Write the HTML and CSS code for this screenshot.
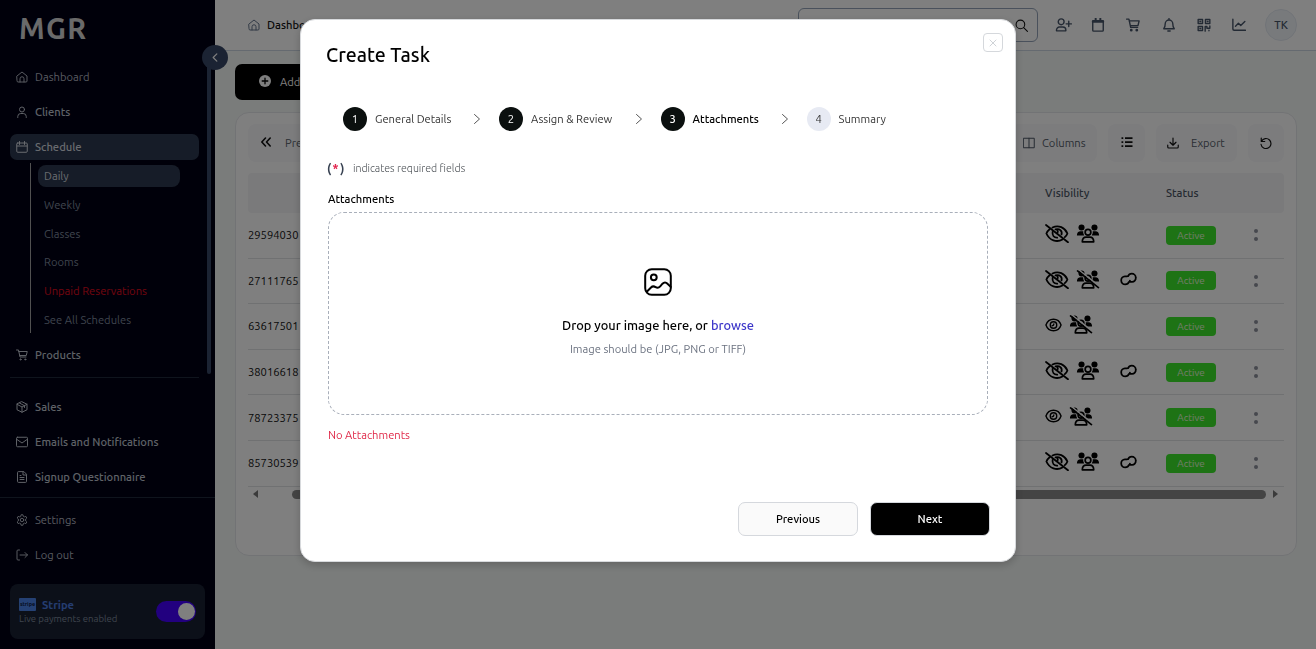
FILE: index.html
```html
<!DOCTYPE html>
<html lang="en">
<head>
<meta charset="utf-8">
<title>MGR - Create Task</title>
<link rel="stylesheet" href="styles.css">
</head>
<body>
<svg class="sprite" aria-hidden="true">
  <symbol id="home" viewBox="0 0 24 24"><path d="M2 10 12 2l10 8v10a2 2 0 0 1-2 2H4a2 2 0 0 1-2-2z"/><path d="M8 22v-6.500a4 4 0 0 1 8 0V22"/></symbol>
  <symbol id="user" viewBox="0 0 24 24"><circle cx="12" cy="7" r="5"/><path d="M3.500 23v-2a6 6 0 0 1 6-6h5a6 6 0 0 1 6 6v2"/></symbol>
  <symbol id="calendar" viewBox="0 0 24 24"><rect x="1.500" y="4" width="21" height="18.500" rx="2"/><path d="M2 10h20M7 1v6M17 1v6"/></symbol>
  <symbol id="cart" viewBox="0 0 24 24"><path d="M1 2h4l3 14h12M5.500 5H22.500l-2 8H7.500"/><circle cx="9" cy="20.800" r="1.200"/><circle cx="18.500" cy="20.800" r="1.200"/></symbol>
  <symbol id="box" viewBox="0 0 24 24"><path d="m12 1.500 10 5v11L12 22.500l-10-5v-11zM2 6.500 12 12l10-5.500M12 12v10.500M7 4l10 5.500V13"/></symbol>
  <symbol id="mail" viewBox="0 0 24 24"><rect x="1" y="2.500" width="22" height="19" rx="2"/><path d="m2 7 10 7 10-7"/></symbol>
  <symbol id="file" viewBox="0 0 24 24"><path d="M15 1.200H5a2 2 0 0 0-2 2v17.600a2 2 0 0 0 2 2h14a2 2 0 0 0 2-2V7.200zM14 2v6h6M8 9h2M8 13h8M8 17h8"/></symbol>
  <symbol id="gear" viewBox="0 0 24 24"><path d="m9.500 4.500.7-3h3.600l.7 3 2.300 1.300 3-1 1.800 3.200-2.300 2v4l2.300 2-1.800 3.200-3-1-2.300 1.300-.7 3h-3.600l-.7-3-2.300-1.300-3 1L2.400 16l2.300-2v-4l-2.300-2 1.800-3.200 3 1z"/><circle cx="12" cy="12" r="3.500"/></symbol>
  <symbol id="logout" viewBox="0 0 24 24"><path d="M7 2H4a2 2 0 0 0-2 2v16a2 2 0 0 0 2 2h3M8 12h15M18 7l5 5-5 5"/></symbol>
  <symbol id="search" viewBox="0 0 24 24"><circle cx="10" cy="10" r="8"/><path d="m16 16 7 7"/></symbol>
  <symbol id="useradd" viewBox="0 0 28 24"><circle cx="10" cy="6.500" r="5"/><path d="M2 22v-1.500a5 5 0 0 1 5-5h6a5 5 0 0 1 5 5V22zM23 5.500v9M18.500 10h9"/></symbol>
  <symbol id="cal2" viewBox="0 0 24 24"><path d="M3 4.500h18V21a1.500 1.500 0 0 1-1.500 1.500h-15A1.500 1.500 0 0 1 3 21z"/><path d="M3 6.500h18M8 1v4M16 1v4" stroke-width="3.400"/></symbol>
  <symbol id="bell" viewBox="0 0 24 24"><path d="M12 1v2M3 18.500c2-2 2.500-4 2.500-8.500a6.500 6.500 0 0 1 13 0c0 4.500.5 6.500 2.500 8.500zM10 22.200h4"/></symbol>
  <symbol id="qr" viewBox="0 0 24 24"><path d="M2 2.500h7.500v7H2zM14.500 2.500H22v7h-7.500zM2 14.500h7.500v7H2zM14 22.500v-8h3v3h5v-4M20.500 22v-1"/><path d="M5 6h1.500M17.500 6H19M5 18h1.500"/></symbol>
  <symbol id="chart" viewBox="0 0 24 24"><path d="M1.500 2v17a2 2 0 0 0 2 2H23M6 14l5-5 4 4 7-7"/></symbol>
  <symbol id="columns" viewBox="0 0 24 24"><path d="M1.500 2.500h21v19h-21zM12 2.500v19"/></symbol>
  <symbol id="list" viewBox="0 0 24 24"><path d="M8 4h15M8 12h15M8 20h15M1 4h3.500M1 12h3.500M1 20h3.500"/></symbol>
  <symbol id="download" viewBox="0 0 24 24"><path d="M12 2v14M6 10.500l6 6 6-6M1.500 16v4a2 2 0 0 0 2 2h17a2 2 0 0 0 2-2v-4"/></symbol>
  <symbol id="undo" viewBox="0 0 24 24"><path d="M2.500 2v7h7M3 8.500a10 10 0 1 1-1 6"/></symbol>
  <symbol id="eye" viewBox="0 0 24 20"><path d="M1.200 10C5-1 19-1 22.800 10 19 21 5 21 1.200 10z"/><circle cx="12" cy="10" r="4.600"/><path d="M10 11c1.500 0 2.500-1 2.500-2.500"/></symbol>
  <symbol id="eyeoff" viewBox="0 0 24 19"><path d="M4.600 5.200C3 6.500 2 8 1.400 9.500c3 7 10.500 9.300 16 6M7.500 3.500c6-3 12.500.2 14.900 6-.5 1.400-1.500 2.700-2.600 3.700"/><path d="M7.600 8c-.6 3.500 1.600 5.900 4.600 5.700M10.500 5.400c4-1.300 7 1.600 6 5M12.300 6.200c.7 1 .6 1.900.2 2.600"/><path d="m1 1 22 17.300"/></symbol>
  <symbol id="team" viewBox="0 0 24 20"><g fill="#000" stroke="none"><circle cx="5.200" cy="3.700" r="3.200"/><circle cx="18.800" cy="3.700" r="3.200"/><path d="M.3 12c0-3 1.500-4.500 4-4.500H7A5.500 5.500 0 0 0 8 12zM23.700 12c0-3-1.500-4.500-4-4.500H17a5.500 5.500 0 0 1-1 4.500z"/></g><circle cx="12" cy="8.700" r="3"/><path d="M6 18.800c0-3.600 1.500-5 4-5h4c2.500 0 4 1.400 4 5z"/></symbol>
  <symbol id="link" viewBox="0 0 18 15"><path d="M7.500 4.600H5.200a4 4 0 0 0-4 4.400c0 2.500 2 4.300 4.300 4.300 1.900 0 3.400-1 4-2.800h3.300a4 4 0 0 0 4-4.400c0-2.500-2-4.300-4.300-4.300-1.900 0-3.300 1-3.900 2.600M10.500 10.400v-1.200"/></symbol>
  <symbol id="picture" viewBox="0 0 28 28"><rect x="1.200" y="1.200" width="25.600" height="25.600" rx="6.500"/><circle cx="9.800" cy="9.300" r="2.900"/><path d="m3 23.500 4-4c1.500-1.500 3-1.400 4.600-.4 1.600 1 3.200.8 4.600-.8l2.300-2.600c1.500-1.600 3.500-1.600 5 0l3.200 3.200"/></symbol>
</svg>

<div class="app">
  <aside class="sidebar">
    <div class="logo">MGR</div>
    <nav class="nav">
      <a class="item dim"><svg class="ico"><use href="#home"/></svg>Dashboard</a>
      <a class="item"><svg class="ico"><use href="#user"/></svg>Clients</a>
      <a class="item active"><svg class="ico"><use href="#calendar"/></svg>Schedule</a>
      <div class="sub">
        <a class="subitem on">Daily</a>
        <a class="subitem">Weekly</a>
        <a class="subitem">Classes</a>
        <a class="subitem">Rooms</a>
        <a class="subitem red">Unpaid Reservations</a>
        <a class="subitem">See All Schedules</a>
      </div>
      <a class="item"><svg class="ico"><use href="#cart"/></svg>Products</a>
      <div class="rule"></div>
      <a class="item"><svg class="ico"><use href="#box"/></svg>Sales</a>
      <a class="item"><svg class="ico"><use href="#mail"/></svg>Emails and Notifications</a>
      <a class="item"><svg class="ico"><use href="#file"/></svg>Signup Questionnaire</a>
    </nav>
    <div class="lower">
      <a class="item dim"><svg class="ico"><use href="#gear"/></svg>Settings</a>
      <a class="item dim"><svg class="ico"><use href="#logout"/></svg>Log out</a>
    </div>
    <div class="stripe">
      <div>
        <div class="stripe-name"><span class="stripe-logo">stripe</span>Stripe</div>
        <div class="stripe-note">Live payments enabled</div>
      </div>
      <span class="toggle"><i></i></span>
    </div>
    <span class="track"></span>
    <span class="collapse"><svg viewBox="0 0 8 12"><path d="M6 2 2 6l4 4"/></svg></span>
  </aside>

  <main class="main">
    <header class="topbar">
      <div class="crumb"><svg class="ico"><use href="#home"/></svg>Dashboard</div>
      <div class="tools">
        <div class="search"><svg><use href="#search"/></svg></div>
        <div class="quick">
          <svg class="wide"><use href="#useradd"/></svg>
          <svg><use href="#cal2"/></svg>
          <svg><use href="#cart"/></svg>
          <svg><use href="#bell"/></svg>
          <svg><use href="#qr"/></svg>
          <svg><use href="#chart"/></svg>
        </div>
        <div class="avatar">TK</div>
      </div>
    </header>
    <div class="content">
      <button class="add"><svg viewBox="0 0 12 12"><circle cx="6" cy="6" r="6"/><path d="M6 3.200v5.600M3.200 6h5.600"/></svg>Add Task</button>
      <section class="card">
        <div class="toolbar">
          <div class="tb prev"><svg viewBox="0 0 12 12"><path d="M5.500 2 1.800 6l3.700 4M10.200 2 6.500 6l3.700 4"/></svg>Previous</div>
          <div class="tb cols"><svg class="grey"><use href="#columns"/></svg>Columns</div>
          <div class="tb sq"><svg class="bold"><use href="#list"/></svg></div>
          <div class="tb exp"><svg><use href="#download"/></svg>Export</div>
          <div class="tb sq last"><svg><use href="#undo"/></svg></div>
        </div>
        <div class="row head"><span></span><span>Visibility</span><span>Status</span><span></span></div>
        <div class="row"><span>29594030</span><span class="vis"><svg class="big"><use href="#eyeoff"/></svg><svg class="big"><use href="#team"/></svg></span><span><em class="badge">Active</em></span><span class="dots"></span></div>
        <div class="row"><span>27111765</span><span class="vis"><svg class="big"><use href="#eyeoff"/></svg><svg class="big" viewBox="0 0 24 20"><use href="#team"/><path class="gap" d="M2.500 0 24.500 17.500"/><path d="m1 1 22 17.500"/></svg><svg class="lnk"><use href="#link"/></svg></span><span><em class="badge">Active</em></span><span class="dots"></span></div>
        <div class="row"><span>63617501</span><span class="vis"><svg class="small"><use href="#eye"/></svg><svg class="big" viewBox="0 0 24 20"><use href="#team"/><path class="gap" d="M2.500 0 24.500 17.500"/><path d="m1 1 22 17.500"/></svg></span><span><em class="badge">Active</em></span><span class="dots"></span></div>
        <div class="row"><span>38016618</span><span class="vis"><svg class="big"><use href="#eyeoff"/></svg><svg class="big"><use href="#team"/></svg><svg class="lnk"><use href="#link"/></svg></span><span><em class="badge">Active</em></span><span class="dots"></span></div>
        <div class="row"><span>78723375</span><span class="vis"><svg class="small"><use href="#eye"/></svg><svg class="big" viewBox="0 0 24 20"><use href="#team"/><path class="gap" d="M2.500 0 24.500 17.500"/><path d="m1 1 22 17.500"/></svg></span><span><em class="badge">Active</em></span><span class="dots"></span></div>
        <div class="row"><span>85730539</span><span class="vis"><svg class="big"><use href="#eyeoff"/></svg><svg class="big"><use href="#team"/></svg><svg class="lnk"><use href="#link"/></svg></span><span><em class="badge">Active</em></span><span class="dots"></span></div>
        <div class="hscroll"><i class="left"></i><i class="thumb"></i><i class="right"></i></div>
      </section>
    </div>
  </main>
</div>

<div class="overlay">
  <div class="modal">
    <div class="modal-head"><h1>Create Task</h1><button class="close"><svg viewBox="0 0 10 10"><path d="m2 2 6 6M8 2 2 8"/></svg></button></div>
    <div class="steps">
      <div class="step s1"><b>1</b><span>General Details</span></div>
      <svg class="chev" viewBox="0 0 8 12"><path d="m1.500 1.500 5 4.500-5 4.500"/></svg>
      <div class="step s2"><b>2</b><span>Assign &amp; Review</span></div>
      <svg class="chev" viewBox="0 0 8 12"><path d="m1.500 1.500 5 4.500-5 4.500"/></svg>
      <div class="step s3 current"><b>3</b><span>Attachments</span></div>
      <svg class="chev" viewBox="0 0 8 12"><path d="m1.500 1.500 5 4.500-5 4.500"/></svg>
      <div class="step s4 todo"><b>4</b><span>Summary</span></div>
    </div>
    <div class="required"><strong>(<i>*</i>)</strong><span>indicates required fields</span></div>
    <div class="label">Attachments</div>
    <div class="drop">
      <svg><use href="#picture"/></svg>
      <p class="drop-title">Drop your image here, or <a>browse</a></p>
      <p class="drop-note">Image should be (JPG, PNG or TIFF)</p>
    </div>
    <div class="none">No Attachments</div>
    <div class="actions"><button class="btn">Previous</button><button class="btn primary">Next</button></div>
  </div>
</div>
</body>
</html>
```

FILE: styles.css
```css
* { box-sizing: border-box; }
body { margin: 0; width: 1316px; height: 649px; overflow: hidden; font-family: Ubuntu, "Noto Sans", sans-serif; font-size: 11.200px; color: #111; }
button { font: inherit; padding: 0; }
svg { fill: none; stroke: currentColor; stroke-width: 2; stroke-linecap: round; stroke-linejoin: round; flex: none; }
.sprite { display: none; }
.app { display: flex; height: 649px; }

.sidebar { position: relative; width: 215px; background: #000014; color: #bfc4cf; display: flex; flex-direction: column; flex: none; }
.logo { height: 64px; padding: 9px 0 0 19px; font-size: 28.800px; line-height: 38px; font-weight: 700; letter-spacing: 1.400px; color: #d4d4d4; }
.nav { padding: 0 16px 7px 10px; border-bottom: 1px solid #1e293b; height: 434px; }
.item { display: flex; align-items: center; gap: 7px; height: 26px; padding-left: 6px; margin-bottom: 9px; border-radius: 7px; white-space: nowrap; font-weight: 500; }
.item.dim { color: #b0b5c0; font-weight: 400; }
.item.active { background: #2d3950; color: #d3d7df; margin-bottom: 3px; }
.ico { width: 12px; height: 12px; }
.sub { margin: 0 19px 9px 20px; border-left: 1px solid #a3a3a3; height: 170px; padding: 2px 0 0 7px; }
.subitem { display: flex; align-items: center; height: 22px; margin-bottom: 6.800px; padding-left: 6px; color: #7f899c; border-radius: 8px; white-space: nowrap; }
.subitem.on { background: #2d3950; color: #d3d7df; }
.subitem.red { color: #e00c1e; }
.rule { height: 1px; background: #1e293b; margin-bottom: 16px; }
.lower { padding: 9px 10px 7px; }
.stripe { margin: 0 10px; width: 195px; height: 55px; border-radius: 8px; background: #182133; display: flex; align-items: center; justify-content: space-between; padding: 0 9px; }
.stripe-name { display: flex; align-items: center; gap: 6px; color: #4a7be0; font-weight: 600; line-height: 14px; }
.stripe-logo { width: 17px; height: 13px; border-radius: 1px; background: #4b83e8; color: #0b1a44; font-size: 5.500px; line-height: 12px; text-align: center; }
.stripe-note { font-size: 9.600px; line-height: 14px; color: #7f899c; }
.toggle { width: 40px; height: 21px; background: #4400ff; border-radius: 11px; display: flex; justify-content: flex-end; padding: 2px 1px; }
.toggle i { width: 17px; height: 17px; border-radius: 50%; background: #fff; }
.track { position: absolute; left: 207px; top: 57px; width: 4px; height: 317px; border-radius: 2px; background: #374766; }
.collapse { position: absolute; left: 202px; top: 45px; width: 26px; height: 25px; border-radius: 50%; background: #374766; color: #fff; display: grid; place-items: center; z-index: 1; }
.collapse svg { width: 8px; height: 11px; stroke-width: 1.300; }

.main { flex: 1; background: #f5f8f6; min-width: 0; }
.topbar { height: 51px; background: #fff; border-bottom: 1px solid #cbd5e1; display: flex; justify-content: space-between; align-items: center; padding: 0 19px 0 33px; }
.crumb { display: flex; align-items: center; gap: 7px; font-weight: 500; }
.crumb .ico { color: #64748b; }
.tools { display: flex; align-items: center; }
.search { width: 240px; height: 34px; border: 1px solid #94a3b8; border-radius: 6px; display: flex; align-items: center; justify-content: flex-end; padding-right: 9px; }
.search svg { width: 13px; height: 13px; }
.quick { display: flex; align-items: center; color: #475569; margin: 0 19px 0 17px; gap: 21.200px; }
.quick svg { width: 14px; height: 14px; stroke-width: 2.400; }
.quick .wide { width: 17px; margin-right: -2px; }
.avatar { width: 32px; height: 32px; border-radius: 50%; background: #f1f5f9; border: 1px solid #e2e8f0; color: #475569; font-weight: 500; display: grid; place-items: center; }
.content { padding: 13px 19px 0 20px; }
.add { display: flex; align-items: center; gap: 9px; width: 120px; height: 36px; background: #000; color: #fff; border: 0; border-radius: 7px; padding-left: 24px; }
.add svg { width: 12px; height: 12px; fill: #fff; stroke: none; margin-top: -3px; }
.add path { stroke: #000; stroke-width: 1.300; }
.card { margin-top: 12px; height: 444px; background: #fff; border: 1px solid #e5e7eb; border-radius: 14px; padding: 11px 12px; }
.toolbar { display: flex; justify-content: flex-end; height: 38px; gap: 11px; margin-bottom: 11px; }
.tb { height: 38px; background: #f8f8fb; border-radius: 8px; display: flex; align-items: center; color: #555c68; }
.tb svg { width: 12px; height: 12px; color: #111; stroke-width: 2.300; }
.tb svg.grey { color: #4b5563; stroke-width: 2; }
.tb svg.bold { stroke-width: 3.500; stroke-linecap: butt; margin-top: -2px; }
.tb.prev { margin-right: auto; width: 90px; padding-left: 12px; gap: 13px; }
.tb.prev svg { stroke-width: 1.600; margin-top: -3px; }
.cols { width: 86px; padding-left: 12px; gap: 7px; }
.sq { width: 36px; justify-content: center; }
.exp { width: 81px; padding-left: 11px; gap: 12px; }
.cols + .sq { width: 37px; }
.row { display: grid; grid-template-columns: 797px 121px 80px 1fr; align-items: center; height: 45.600px; border-bottom: 1px solid #e0e2e5; }
.row.head { height: 40px; background: #f4f4f7; border: 0; border-radius: 4px; font-weight: 500; color: #4b5563; }
.vis { display: flex; align-items: center; height: 20px; margin-top: -3px; color: #000; }
.big { width: 24px; height: 19px; margin-right: 7px; stroke-width: 1.800; }
.small { width: 17px; height: 14px; margin-right: 7px; }
.lnk { width: 17px; height: 14px; margin-left: 13px; stroke-width: 1.900; }
.gap { stroke: #fff; stroke-width: 1.600; }
.badge { display: block; width: 50px; height: 19px; background: #3ce62a; color: #e4fad8; border-radius: 4px; text-align: center; font-size: 9.900px; font-weight: 400; line-height: 20px; font-style: normal; }
.dots { display: flex; flex-direction: column; align-items: center; gap: 4px; width: 20px; }
.dots::before, .dots::after { content: ""; width: 4px; height: 4px; border-radius: 50%; background: #8d919c; }
.hscroll { display: flex; align-items: center; height: 15px; padding: 0 6px 0 5px; }
.hscroll i { display: block; }
.left { border: 4px solid transparent; border-right: 5px solid #777; border-left: 0; }
.right { border: 4px solid transparent; border-left: 5px solid #777; border-right: 0; margin-left: 7px; }
.thumb { flex: 1; height: 9px; background: #888; border-radius: 5px; margin-left: 34px; }

.overlay { position: fixed; inset: 0; z-index: 5; background: rgba(0,0,0,.5); display: flex; justify-content: center; align-items: flex-start; padding-top: 19px; }
.modal { width: 716px; height: 543px; background: #fff; border: 1px solid #d8dadd; border-radius: 15px; padding: 12px 26px 0 27px; box-shadow: 0 3px 8px rgba(0,0,0,.2); display: flex; flex-direction: column; }
.modal-head { display: flex; justify-content: space-between; margin: 0 -14px 0 -2px; }
h1 { margin: 11px 0 0; font-size: 19.500px; line-height: 24px; font-weight: 500; color: #000; }
.close { width: 20px; height: 19px; margin-top: 1px; background: #fff; border: 1px solid #d5d8dc; border-radius: 4px; color: #cfd3d7; display: grid; place-items: center; }
.close svg { width: 10px; height: 10px; stroke-width: 1; }
.steps { display: flex; align-items: center; margin: 40px 0 0 15px; height: 24px; }
.step { display: flex; align-items: center; gap: 8px; color: #333; white-space: nowrap; }
.step b { width: 24px; height: 24px; border-radius: 50%; background: #0b100f; color: #fff; font-weight: 400; display: grid; place-items: center; }
.s1 { width: 130px; } .s2 { width: 135.600px; } .s3 { width: 120px; }
.step.current { color: #000; font-weight: 500; }
.step.current b { font-weight: 500; }
.step.todo b { background: #e7eaf3; color: #333; }
.chev { width: 8px; height: 12px; stroke-width: 1; color: #555; margin-right: 18px; }
.required { display: flex; align-items: center; gap: 7px; margin-top: 28px; height: 18px; color: #4b5055; font-weight: 300; }
.required span { font-size: 10.600px; }
.required strong { color: #374151; letter-spacing: 1.600px; font-size: 12px; font-weight: 700; margin-left: -1px; }
.required i { color: #e11d48; font-style: normal; }
.label { margin-top: 14px; height: 16px; line-height: 16px; font-weight: 500; color: #000; }
.drop { margin-top: 5px; width: 660px; height: 203px; border: 1px dashed #a9afba; border-radius: 16px; display: flex; flex-direction: column; align-items: center; padding-top: 55px; }
.drop svg { width: 28px; height: 28px; color: #000; }
.drop p { margin: 0; white-space: nowrap; }
.drop .drop-title { margin-top: 20px; font-size: 12.800px; line-height: 18px; font-weight: 500; color: #000; }
.drop-title a { color: #3b35c9; }
.drop .drop-note { margin-top: 7px; line-height: 16px; color: #6b7280; }
.none { margin-top: 12px; line-height: 16px; color: #e02848; }
.actions { display: flex; justify-content: flex-end; gap: 12px; margin: 59px -1px 0 0; }
.btn { width: 120px; height: 34px; border: 1px solid #d5d8dd; border-radius: 7px; background: #fafafa; color: #000; font-weight: 500; }
.btn.primary { background: #000; color: #fff; }
```
